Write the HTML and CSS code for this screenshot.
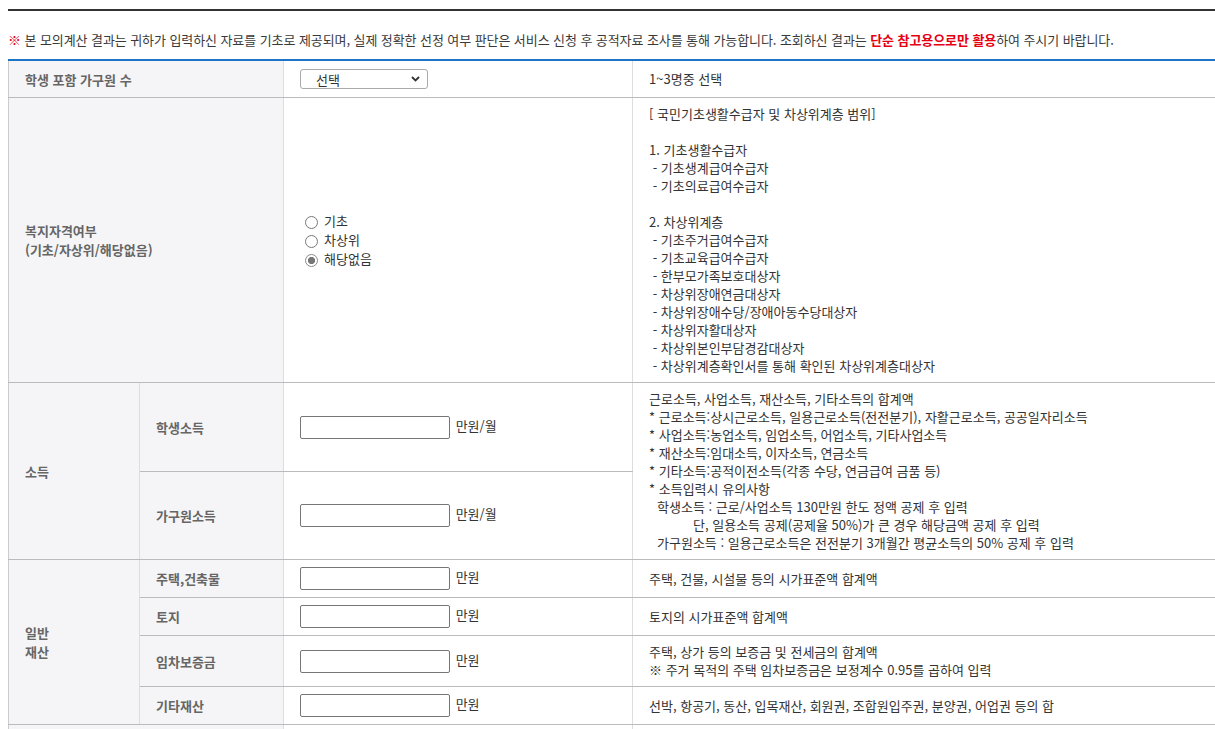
FILE: index.html
```html
<!DOCTYPE html>
<html lang="ko">
  <head>
    <meta charset="UTF-8" />
    <meta name="viewport" content="width=device-width, initial-scale=1.0" />
    <title>모의계산</title>
    <link rel="stylesheet" href="styles.css">
  </head>
  <body>
    <div class="wrap">
      <div class="top-line"></div>
      <p class="notice">
        <span class="mark">※</span> 본 모의계산 결과는 귀하가 입력하신 자료를 기초로 제공되며, 실제 정확한 선정 여부 판단은 서비스 신청 후 공적자료 조사를 통해 가능합니다. 조회하신 결과는 <strong class="red">단순 참고용으로만 활용</strong>하여 주시기 바랍니다.
      </p>
      <table class="calc">
        <colgroup>
          <col class="c1" />
          <col class="c2" />
          <col class="c3" />
          <col />
        </colgroup>
        <tbody>
          <tr class="r-select">
            <th colspan="2">학생 포함 가구원 수</th>
            <td>
              <span class="sel">
                <select>
                  <option>선택</option>
                  <option>1명</option>
                  <option>2명</option>
                  <option>3명</option>
                </select>
                <svg class="chev" width="9" height="6" viewBox="0 0 9 6"><path d="M1 1 L4.5 4.5 L8 1" fill="none" stroke="#333" stroke-width="1.8"/></svg>
              </span>
            </td>
            <td class="desc">1~3명중 선택</td>
          </tr>
          <tr>
            <th colspan="2">복지자격여부<br>(기초/자상위/해당없음)</th>
            <td>
              <label class="radio"><input type="radio" name="welfare" /> 기초</label>
              <label class="radio"><input type="radio" name="welfare" /> 차상위</label>
              <label class="radio"><input type="radio" name="welfare" checked /> 해당없음</label>
            </td>
            <td class="desc">
              [ 국민기초생활수급자 및 차상위계층 범위]<br>
              <br>
              1. 기초생활수급자<br>
              &nbsp;- 기초생계급여수급자<br>
              &nbsp;- 기초의료급여수급자<br>
              <br>
              2. 차상위계층<br>
              &nbsp;- 기초주거급여수급자<br>
              &nbsp;- 기초교육급여수급자<br>
              &nbsp;- 한부모가족보호대상자<br>
              &nbsp;- 차상위장애연금대상자<br>
              &nbsp;- 차상위장애수당/장애아동수당대상자<br>
              &nbsp;- 차상위자활대상자<br>
              &nbsp;- 차상위본인부담경감대상자<br>
              &nbsp;- 차상위계층확인서를 통해 확인된 차상위계층대상자
            </td>
          </tr>
          <tr>
            <th rowspan="2">소득</th>
            <th class="sub">학생소득</th>
            <td><input type="text" class="num" /> 만원/월</td>
            <td class="desc" rowspan="2">
              근로소득, 사업소득, 재산소득, 기타소득의 합계액<br>
              * 근로소득:상시근로소득, 일용근로소득(전전분기), 자활근로소득, 공공일자리소득<br>
              * 사업소득:농업소득, 임업소득, 어업소득, 기타사업소득<br>
              * 재산소득:임대소득, 이자소득, 연금소득<br>
              * 기타소득:공적이전소득(각종 수당, 연금급여 금품 등)<br>
              * 소득입력시 유의사항
              <span class="ind">학생소득 : 근로/사업소득 130만원 한도 정액 공제 후 입력</span>
              <span class="ind2">단, 일용소득 공제(공제율 50%)가 큰 경우 해당금액 공제 후 입력</span>
              <span class="ind">가구원소득 : 일용근로소득은 전전분기 3개월간 평균소득의 50% 공제 후 입력</span>
            </td>
          </tr>
          <tr>
            <th class="sub">가구원소득</th>
            <td><input type="text" class="num" /> 만원/월</td>
          </tr>
          <tr>
            <th rowspan="4">일반<br>재산</th>
            <th class="sub">주택,건축물</th>
            <td><input type="text" class="num" /> 만원</td>
            <td class="desc">주택, 건물, 시설물 등의 시가표준액 합계액</td>
          </tr>
          <tr>
            <th class="sub">토지</th>
            <td><input type="text" class="num" /> 만원</td>
            <td class="desc">토지의 시가표준액 합계액</td>
          </tr>
          <tr>
            <th class="sub">임차보증금</th>
            <td><input type="text" class="num" /> 만원</td>
            <td class="desc">주택, 상가 등의 보증금 및 전세금의 합계액<br>※ 주거 목적의 주택 임차보증금은 보정계수 0.95를 곱하여 입력</td>
          </tr>
          <tr>
            <th class="sub">기타재산</th>
            <td><input type="text" class="num" /> 만원</td>
            <td class="desc">선박, 항공기, 동산, 입목재산, 회원권, 조합원입주권, 분양권, 어업권 등의 합</td>
          </tr>
          <tr class="r-next">
            <th colspan="2"></th>
            <td></td>
            <td class="desc"></td>
          </tr>
        </tbody>
      </table>
    </div>
  </body>
</html>
```

FILE: styles.css
```css
html, body {
  margin: 0;
  padding: 0;
  background: #ffffff;
  overflow: hidden;
}
body {
  font-family: "Malgun Gothic", "Noto Sans CJK KR", sans-serif;
  font-size: 13px;
  line-height: 18px;
  color: #333333;
}
.wrap {
  margin-left: 8px;
  width: 1207px;
}
.top-line {
  margin-top: 9px;
  height: 2px;
  background: #333333;
}
.notice {
  margin: 20px 0 10px;
  color: #3a3a3a;
  white-space: nowrap;
  letter-spacing: -0.08px;
}
.mark,
.red {
  color: #e60012;
}
.red {
  font-weight: bold;
}
.calc {
  width: 100%;
  table-layout: fixed;
  border-collapse: collapse;
  border-top: 2px solid #1b74c5;
  border-left: 1px solid #cccccc;
}
.c1 {
  width: 131px;
}
.c2 {
  width: 144px;
}
.c3 {
  width: 349px;
}
.calc th,
.calc td {
  padding: 7px 16px;
  border-bottom: 1px solid #bbbbbb;
  border-right: 1px solid #dddddd;
  text-align: left;
  vertical-align: middle;
}
.calc th {
  background: #f5f5f7;
  color: #666666;
  font-weight: bold;
  line-height: 19px;
}
.calc th.sub {
  border-left: 1px solid #e3e3e3;
}
.calc td.desc {
  border-right: none;
}
.r-select th,
.r-select td {
  padding-top: 8px;
  padding-bottom: 8px;
}
.r-next th,
.r-next td {
  height: 24px;
}
.sel {
  position: relative;
  display: inline-block;
  vertical-align: middle;
}
.sel select {
  appearance: none;
  -webkit-appearance: none;
  width: 128px;
  height: 20px;
  padding: 0 0 0 15px;
  border: 1px solid #aaaaaa;
  border-radius: 3px;
  background: #ffffff;
  font-family: inherit;
  font-size: 13px;
  color: #333333;
  display: block;
}
.chev {
  position: absolute;
  right: 8px;
  top: 7px;
}
.radio {
  display: flex;
  align-items: center;
  height: 19px;
}
.radio input {
  appearance: none;
  -webkit-appearance: none;
  width: 13px;
  height: 13px;
  margin: 3px 6px 0 5px;
  border: 1px solid #777777;
  border-radius: 50%;
  background: #ffffff;
}
.radio input:checked {
  border-color: #8a8a8a;
  background: radial-gradient(circle, #767676 0 3.3px, #ffffff 3.9px);
}
.num {
  width: 150px;
  height: 23px;
  box-sizing: border-box;
  margin: 0 2px 0 0;
  padding: 0 4px;
  border: 1px solid #767676;
  border-radius: 2px;
  font-family: inherit;
  font-size: 13px;
  vertical-align: middle;
}
.ind {
  display: block;
  padding-left: 8px;
}
.ind2 {
  display: block;
  padding-left: 44px;
}
```
